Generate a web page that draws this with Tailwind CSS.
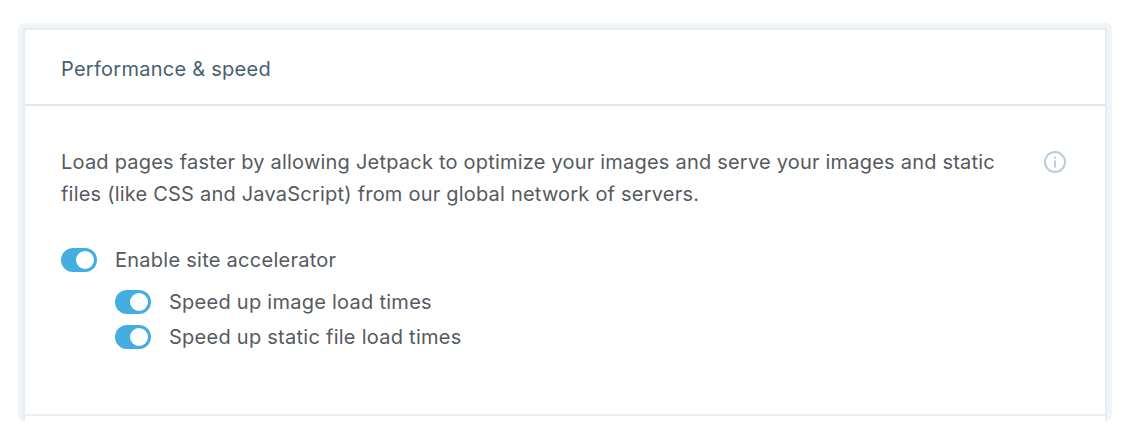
<!DOCTYPE html>
<html lang="en">
<head>
  <meta charset="UTF-8" />
  <title>Performance &amp; speed</title>
  <script src="https://cdn.jsdelivr.net/npm/@tailwindcss/browser@4"></script>
</head>
<body class="bg-white font-['Inter',sans-serif] tracking-[0.26px] overflow-hidden">
  <div class="pt-[23px] pl-[18px]">
    <div class="w-[1094px] h-[398px] bg-[#f2f5f8] rounded-md px-[5px] pt-[5px]">
      <div class="h-[393px] bg-white border-x-2 border-t-2 border-[#e6edf2]">
        <div class="h-[76px] flex items-center pl-[36px] pt-[3px] border-b-2 border-[#e1e9ef] text-[20px] text-[#47606f]">Performance &amp; speed</div>
        <div class="h-[310px] border-b-2 border-[#e9eff3] pl-[36px] pr-[38px] pt-[40px] text-[#555a5f]">
          <div class="flex justify-between">
            <p class="w-[950px] text-[20px] leading-[32px] tracking-[0.21px]">Load pages faster by allowing Jetpack to optimize your images and serve your images and static files (like CSS and JavaScript) from our global network of servers.</p>
            <svg class="w-[24px] h-[24px] mt-[4px]" viewBox="0 0 24 24" fill="none" stroke="#b9cddc" stroke-width="2">
              <circle cx="12" cy="12" r="10" />
              <path d="M12 10.5v7M12 6.5v2" />
            </svg>
          </div>
          <div class="flex items-center gap-[18px] mt-[38px] text-[20px] leading-[24px]">
            <span class="w-[36px] h-[24px] flex items-center justify-end rounded-full bg-[#45ade0] pr-[3px]"><span class="w-[18px] h-[18px] rounded-full bg-white"></span></span>
            <span>Enable site accelerator</span>
          </div>
          <div class="flex flex-col gap-[11px] mt-[18px] ml-[54px] text-[20px] leading-[24px]">
            <div class="flex items-center gap-[18px]">
              <span class="w-[36px] h-[24px] flex items-center justify-end rounded-full bg-[#45ade0] pr-[3px]"><span class="w-[18px] h-[18px] rounded-full bg-white"></span></span>
              <span>Speed up image load times</span>
            </div>
            <div class="flex items-center gap-[18px]">
              <span class="w-[36px] h-[24px] flex items-center justify-end rounded-full bg-[#45ade0] pr-[3px]"><span class="w-[18px] h-[18px] rounded-full bg-white"></span></span>
              <span>Speed up static file load times</span>
            </div>
          </div>
        </div>
      </div>
    </div>
  </div>
</body>
</html>
